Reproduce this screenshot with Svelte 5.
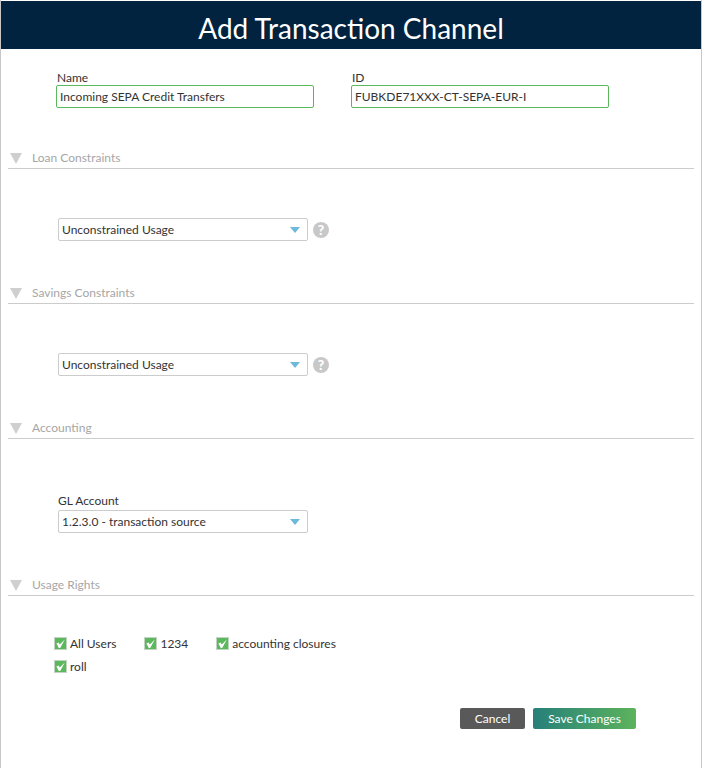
<script>
    const sections = [
        { title: 'Loan Constraints', value: 'Unconstrained Usage', help: true, top: 'gap-loan' },
        { title: 'Savings Constraints', value: 'Unconstrained Usage', help: true, top: 'gap-savings' },
        { title: 'Accounting', value: '1.2.3.0 - transaction source', label: 'GL Account', top: 'gap-accounting' },
    ]
    const rights = ['All Users', '1234', 'accounting closures', 'roll']
</script>

<div class="dialog">
    <header class="title">Add Transaction Channel</header>

    <div class="fields">
        <div class="field">
            <div class="label">Name</div>
            <div class="input">Incoming SEPA Credit Transfers</div>
        </div>
        <div class="field">
            <div class="label">ID</div>
            <div class="input">FUBKDE71XXX-CT-SEPA-EUR-I</div>
        </div>
    </div>

    {#each sections as s}
        <div class="section {s.top}">
            <svg class="arrow" width="12" height="11" viewBox="0 0 12 11"><path d="M0 0H12L6 11Z" fill="#cfcfcf" /></svg>
            <span>{s.title}</span>
        </div>
        <div class="body" class:labelled={s.label}>
            {#if s.label}<div class="label">{s.label}</div>{/if}
            <div class="select-row">
                <div class="select">
                    <span>{s.value}</span>
                    <svg width="10" height="6" viewBox="0 0 10 6"><path d="M0 0H10L5 6Z" fill="#6db9dc" /></svg>
                </div>
                {#if s.help}
                    <div class="help">?</div>
                {/if}
            </div>
        </div>
    {/each}

    <div class="section gap-rights">
        <svg class="arrow" width="12" height="11" viewBox="0 0 12 11"><path d="M0 0H12L6 11Z" fill="#cfcfcf" /></svg>
        <span>Usage Rights</span>
    </div>

    <div class="rights">
        {#each rights as r}
            <div class="right">
                <svg width="13" height="13" viewBox="0 0 13 13">
                    <rect x="0.5" y="0.5" width="12" height="12" fill="#5cb85c" stroke="#c4d4c4" />
                    <path d="M2.4 6.4L4.6 5.6L5.8 7.4L10.8 2.6L6.2 11H4.8Z" fill="#fff" />
                </svg>
                <span>{r}</span>
            </div>
        {/each}
    </div>

    <div class="actions">
        <button class="btn cancel">Cancel</button>
        <button class="btn save">Save Changes</button>
    </div>
</div>

<style>
    :global(body) {
        background: #fff;
    }
    .dialog {
        box-sizing: border-box;
        width: 702px;
        height: 768px;
        padding-top: 1px;
        border-left: 1px solid #c8c8c8;
        border-right: 1px solid #c8c8c8;
        font-family: Lato, "Liberation Sans", sans-serif;
        font-size: 12px;
        color: #333;
        overflow: hidden;
    }
    .title {
        height: 48px;
        line-height: 55px;
        background: #012340;
        color: #fff;
        font-size: 28px;
        text-align: center;
    }
    .fields {
        display: flex;
        gap: 37px;
        margin: 21px 0 0 55px;
    }
    .field {
        width: 258px;
    }
    .label {
        height: 15px;
        line-height: 16px;
        padding-left: 1px;
        color: #333;
    }
    .input {
        box-sizing: border-box;
        height: 23px;
        line-height: 21px;
        padding-left: 3px;
        border: 1px solid #5cb85c;
        border-radius: 2px;
    }
    .section {
        display: flex;
        align-items: center;
        height: 21px;
        margin: 0 7px;
        border-bottom: 1px solid #ccc;
        color: #a6a6a6;
    }
    .gap-loan { margin-top: 39px; }
    .gap-savings { margin-top: 41px; }
    .gap-accounting { margin-top: 41px; }
    .gap-rights { margin-top: 41px; }
    .section span {
        margin-left: 10px;
    }
    .arrow {
        margin-left: 2px;
        margin-top: 1px;
    }
    .body {
        margin: 49px 0 0 57px;
    }
    .body.labelled {
        margin: 54px 0 0 57px;
    }
    .body.labelled .label {
        padding-left: 0;
        height: 17px;
    }
    .select-row {
        display: flex;
        align-items: center;
        gap: 5px;
    }
    .select {
        box-sizing: border-box;
        display: flex;
        align-items: center;
        justify-content: space-between;
        width: 250px;
        height: 23px;
        padding: 0 7px 0 3px;
        border: 1px solid #ccc;
        border-radius: 2px;
    }
    .help {
        width: 16px;
        height: 16px;
        line-height: 16px;
        border-radius: 50%;
        background: #c8c8c8;
        color: #fff;
        font-weight: 900;
        font-size: 14px;
        text-align: center;
    }
    .rights {
        display: flex;
        flex-wrap: wrap;
        width: 330px;
        margin: 40px 0 0 53px;
        row-gap: 9px;
    }
    .right {
        display: flex;
        align-items: center;
        gap: 3px;
        height: 14px;
        margin-right: 28px;
    }
    .actions {
        display: flex;
        gap: 8px;
        margin: 35px 0 0 459px;
    }
    .btn {
        height: 21px;
        padding: 0;
        border: none;
        border-radius: 2px;
        color: #fff;
        font-family: inherit;
        font-size: 12px;
    }
    .cancel {
        width: 65px;
        background: #595959;
    }
    .save {
        width: 103px;
        background: linear-gradient(90deg, #26807a, #5cb35c);
    }
</style>
